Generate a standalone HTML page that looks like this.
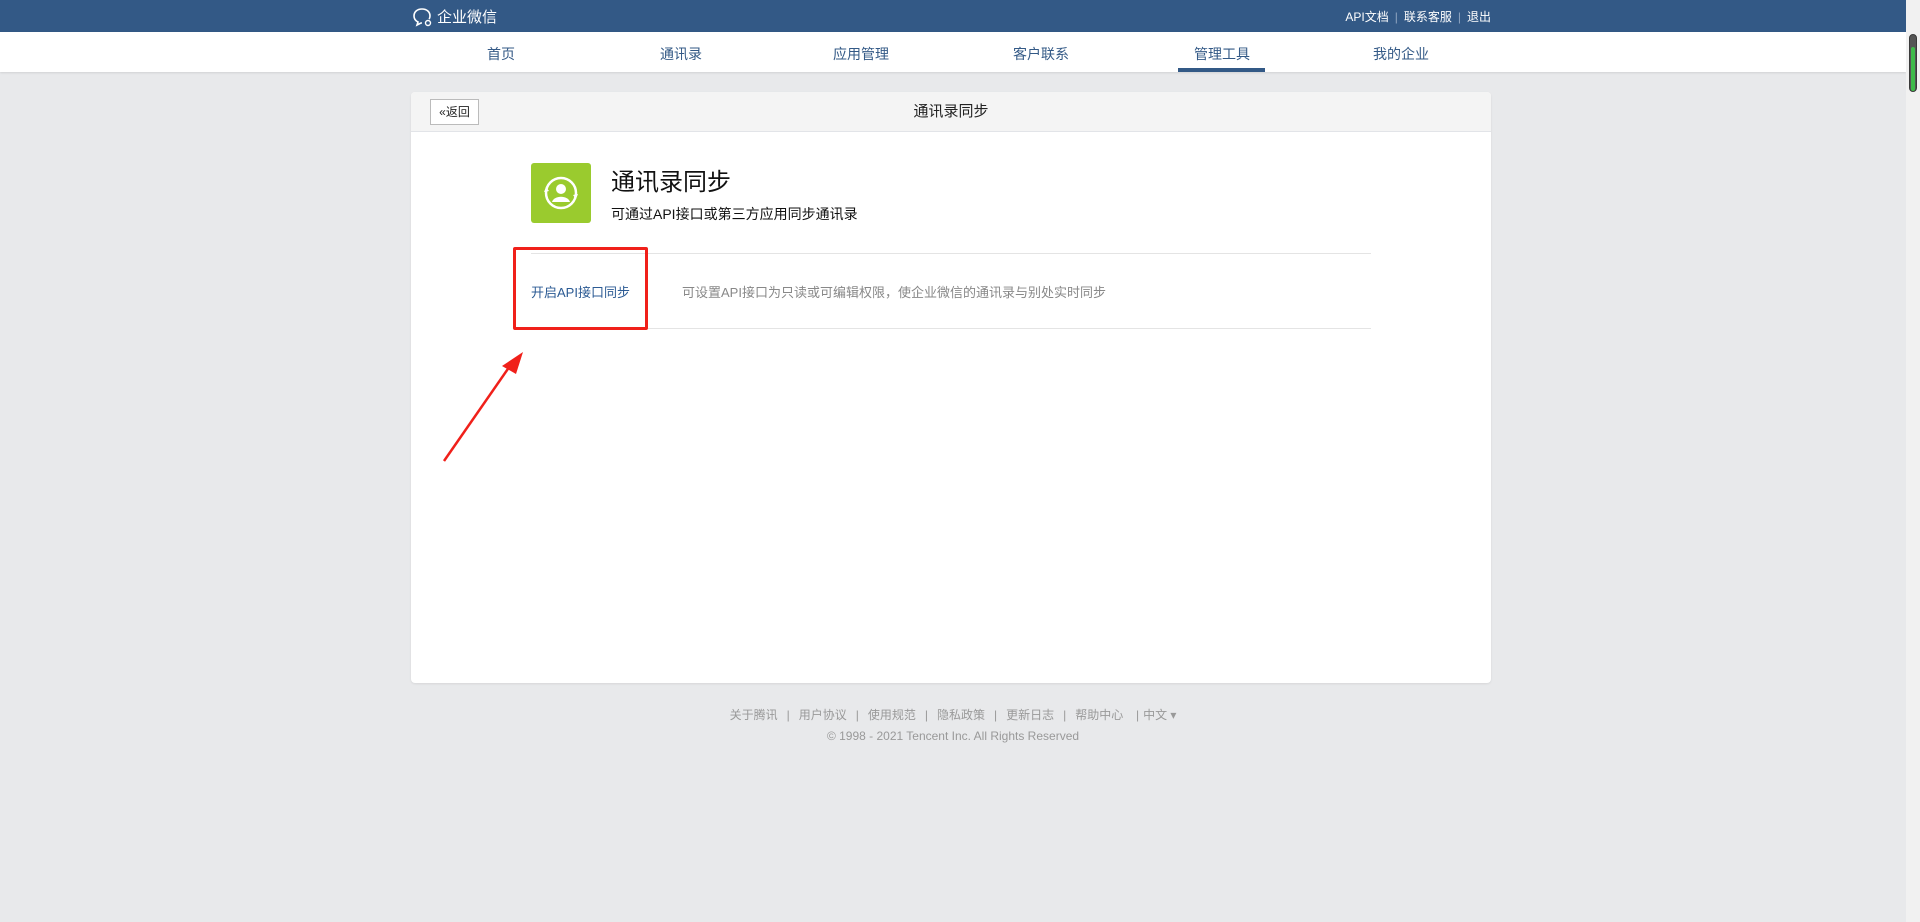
<!DOCTYPE html>
<html><head><meta charset="utf-8"><style>
*{margin:0;padding:0;box-sizing:border-box}
body{width:1920px;height:922px;background:#e8e9eb;font-family:"Liberation Sans","Noto Sans CJK SC",sans-serif;position:relative;overflow:hidden}
.top{position:absolute;left:0;top:0;width:1906px;height:32px;background:#335986}
.logo{position:absolute;left:412px;top:6px;color:#fff;font-size:15px;display:flex;align-items:center;gap:3px}
.rlinks{position:absolute;right:415px;top:8px;color:#fff;font-size:12px}
.rlinks span.s{color:#8fa5c0;margin:0 6px}
.nav{position:absolute;left:0;top:32px;width:1906px;height:40px;background:#fff;box-shadow:0 1px 2px rgba(0,0,0,.1)}
.nav a{position:absolute;top:12px;font-size:14px;color:#335986;transform:translateX(-50%);white-space:nowrap}
.ul{position:absolute;left:1178px;top:68px;width:87px;height:4px;background:#335986}
.card{position:absolute;left:411px;top:92px;width:1080px;height:591px;background:#fff;border-radius:4px;box-shadow:0 1px 2px rgba(0,0,0,.08)}
.hd{height:40px;background:#f4f4f4;border-bottom:1px solid #e2e4e8;border-radius:4px 4px 0 0;position:relative;text-align:center;line-height:40px;font-size:15px;color:#222}
.back{position:absolute;left:19px;top:7px;width:49px;height:26px;border:1px solid #bbb;background:#fff;font-size:12px;line-height:24px;color:#222}
.icon{position:absolute;left:120px;top:71px;width:60px;height:60px;background:#9acb2e;border-radius:3px}
.t1{position:absolute;left:200px;top:70px;font-size:24px;color:#111}
.t2{position:absolute;left:200px;top:112px;font-size:14px;color:#111}
.line{position:absolute;left:120px;width:840px;height:1px;background:#e4e4e4}
.lk{position:absolute;left:120px;top:190px;font-size:13px;color:#2c5b94}
.ds{position:absolute;left:271px;top:190px;font-size:13px;color:#888}
.red{position:absolute;left:513px;top:247px;width:135px;height:83px;border:3px solid #f0201a;border-radius:2px}
.foot{position:absolute;left:0;width:1906px;text-align:center;font-size:12px;color:#999}
.foot b{font-weight:normal;margin:0 9px}
.sb{position:absolute;right:0;top:0;width:14px;height:922px;background:#f1f1f1}
.th{position:absolute;right:3px;top:34px;width:8px;height:58px;border-radius:4px;background:#555;border:1px solid #3a3a3a}
.th i{position:absolute;left:1px;top:12px;width:4px;height:44px;background:#3fba4a;border-radius:2px}
</style></head><body>
<div class="top">
<div class="logo"><svg width="22" height="20" viewBox="0 0 22 20"><path d="M10 2C5 2 2 5 2 9c0 3 2 5 4 6l-1 3 4-2c1 0 1 0 1 0" fill="none" stroke="#fff" stroke-width="1.6"/><path d="M10 2c5 0 8 3 8 7 0 1 0 2-1 3" fill="none" stroke="#fff" stroke-width="1.6"/><circle cx="16" cy="16" r="2.5" fill="none" stroke="#fff" stroke-width="1.4"/></svg>企业微信</div>
<div class="rlinks">API文档<span class="s">|</span>联系客服<span class="s">|</span>退出</div>
</div>
<div class="nav">
<a style="left:501px">首页</a><a style="left:681px">通讯录</a><a style="left:861px">应用管理</a><a style="left:1041px">客户联系</a><a style="left:1222px">管理工具</a><a style="left:1401px">我的企业</a>
</div>
<div class="ul"></div>
<div class="card">
<div class="hd"><div class="back">«返回</div>通讯录同步</div>
<div class="icon"><svg width="60" height="60" viewBox="0 0 60 60"><circle cx="30" cy="30" r="15" fill="none" stroke="#fff" stroke-width="2.5"/><circle cx="30" cy="26" r="5" fill="#fff"/><path d="M21 39c2-7 16-7 18 0z" fill="#fff"/><path d="M13 29l2-5 3 4zM47 31l-2 5-3-4z" fill="#fff"/></svg></div>
<div class="t1">通讯录同步</div>
<div class="t2">可通过API接口或第三方应用同步通讯录</div>
<div class="line" style="top:161px"></div>
<div class="line" style="top:236px"></div>
<div class="lk">开启API接口同步</div>
<div class="ds">可设置API接口为只读或可编辑权限，使企业微信的通讯录与别处实时同步</div>
</div>
<div class="red"></div>
<svg style="position:absolute;left:0;top:0" width="1920" height="922"><path d="M444 461L512 363" stroke="#f0201a" stroke-width="2.5"/><path d="M523 352L502 366L516 374Z" fill="#f0201a"/></svg>
<div class="foot" style="top:706px">关于腾讯<b>|</b>用户协议<b>|</b>使用规范<b>|</b>隐私政策<b>|</b>更新日志<b>|</b>帮助中心&nbsp;&nbsp;<b style="margin-left:6px;margin-right:4px">|</b>中文 ▾</div>
<div class="foot" style="top:729px">© 1998 - 2021 Tencent Inc. All Rights Reserved</div>
<div class="sb"><div class="th"><i></i></div></div>
</body></html>
